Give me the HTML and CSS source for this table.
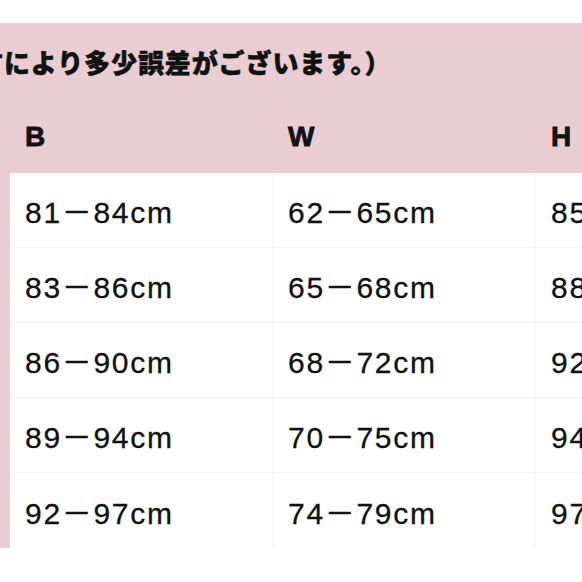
FILE: index.html
```html
<!DOCTYPE html>
<html lang="ja">
<head>
<meta charset="utf-8">
<link rel="stylesheet" href="styles.css">
</head>
<body>
<div class="page">
  <div class="panel">
    <p class="note">方により多少誤差がございます。）</p>
    <div class="grid head">
      <div class="cell">B</div>
      <div class="cell">W</div>
      <div class="cell">H</div>
    </div>
    <div class="table">
      <div class="grid row">
        <div class="cell">81－84cm</div>
        <div class="cell">62－65cm</div>
        <div class="cell">85－88cm</div>
      </div>
      <div class="grid row">
        <div class="cell">83－86cm</div>
        <div class="cell">65－68cm</div>
        <div class="cell">88－91cm</div>
      </div>
      <div class="grid row">
        <div class="cell">86－90cm</div>
        <div class="cell">68－72cm</div>
        <div class="cell">92－96cm</div>
      </div>
      <div class="grid row">
        <div class="cell">89－94cm</div>
        <div class="cell">70－75cm</div>
        <div class="cell">94－99cm</div>
      </div>
      <div class="grid row last">
        <div class="cell">92－97cm</div>
        <div class="cell">74－79cm</div>
        <div class="cell">97－102cm</div>
      </div>
    </div>
  </div>
</div>
</body>
</html>
```

FILE: styles.css
```css
html, body {
  margin: 0;
  padding: 0;
  background: #ffffff;
  overflow: hidden;
  width: 582px;
  height: 582px;
}

.page {
  padding-top: 23px;
  font-family: "Liberation Sans", "Noto Sans CJK JP", sans-serif;
  color: #111111;
}

.panel {
  background: #eacdd2;
  height: 525px;
  width: 582px;
  overflow: hidden;
}

.note {
  margin: 0 0 0 -23px;
  height: 77px;
  display: flex;
  align-items: center;
  font-family: "Noto Sans CJK JP", sans-serif;
  font-weight: 900;
  font-size: 26px;
  letter-spacing: 0.9px;
  white-space: nowrap;
  box-sizing: border-box;
  -webkit-text-stroke: 0.5px #111111;
}

.grid {
  display: grid;
  grid-template-columns: 263px 263px 263px;
  width: 789px;
}

.head {
  height: 73px;
  margin-left: 10px;
  align-items: center;
  font-weight: 700;
  font-size: 28px;
}

.head .cell {
  padding-left: 15px;
  -webkit-text-stroke: 0.8px #111111;
}

.table {
  background: #ffffff;
  margin-left: 10px;
  width: 789px;
}

.row {
  height: 75px;
  align-items: center;
  font-size: 30px;
  letter-spacing: 1.7px;
  border-bottom: 1px solid #f6f3f3;
  box-sizing: border-box;
}

.row.last {
  border-bottom: none;
}

.row .cell {
  padding-left: 15px;
  height: 100%;
  display: flex;
  align-items: center;
  white-space: nowrap;
  border-right: 1px solid #f6f3f3;
  -webkit-text-stroke: 0.3px #111111;
}
```
